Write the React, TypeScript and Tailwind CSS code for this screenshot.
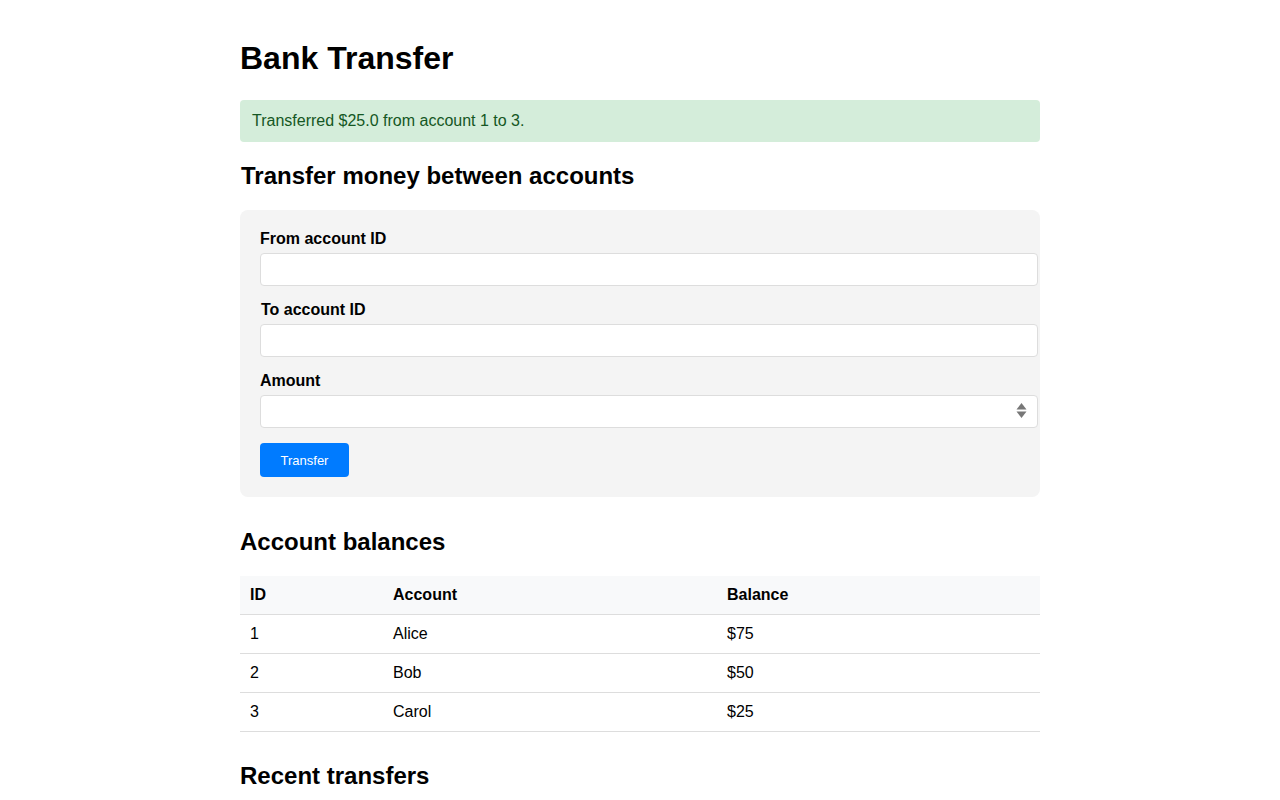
import React from "react";

export default function App() {
  const rows = [
    { id: 1, name: "Alice", bal: "$75" },
    { id: 2, name: "Bob", bal: "$50" },
    { id: 3, name: "Carol", bal: "$25" },
  ];
  return (
    <div
      className="min-h-[800px] bg-white text-black"
      style={{ fontFamily: '"Liberation Sans", Arial, sans-serif' }}
    >
      <div className="mx-auto w-[800px] pt-[40px] pb-10">
        <h1 className="text-[32px] font-bold leading-[37px]">Bank Transfer</h1>
        <div className="mt-[23px] rounded-[4px] bg-[#d4edda] px-[12px] py-[12px] text-[16px] leading-[18px] text-[#155724]">
          Transferred $25.0 from account 1 to 3.
        </div>
        <h2 className="mt-[20px] pl-px text-[24px] font-bold leading-[28px]">
          Transfer money between accounts
        </h2>
        <form
          className="mt-[20px] rounded-[8px] bg-[#f4f4f4] p-[20px]"
          onSubmit={(e) => e.preventDefault()}
        >
          <label className="block text-[16px] font-bold leading-[18px]">From account ID</label>
          <input
            type="text"
            className="mt-[5px] block h-[33px] w-[778px] rounded-[4px] border border-[#dddddd] bg-white px-[8px] text-[13px] outline-none"
          />
          <label className="mt-[15px] block pl-px text-[16px] font-bold leading-[18px]">To account ID</label>
          <input
            type="text"
            className="mt-[5px] block h-[33px] w-[778px] rounded-[4px] border border-[#dddddd] bg-white px-[8px] text-[13px] outline-none"
          />
          <label className="mt-[15px] block text-[16px] font-bold leading-[18px]">Amount</label>
          <div className="relative mt-[5px] h-[33px] w-[778px]">
            <input
              type="text"
              inputMode="decimal"
              className="block h-[33px] w-[778px] rounded-[4px] border border-[#dddddd] bg-white px-[8px] pr-[30px] text-[13px] outline-none"
            />
            <svg
              className="pointer-events-none absolute left-[756px] top-[8px]"
              width="11"
              height="16"
              viewBox="0 0 11 16"
            >
              <path d="M5.5 0 L10.5 6.5 L0.5 6.5 Z" fill="#777777" />
              <path d="M0.5 8.5 L10.5 8.5 L5.5 15 Z" fill="#777777" />
            </svg>
          </div>
          <button
            type="submit"
            className="mt-[15px] flex h-[34px] w-[89px] items-center justify-center rounded-[4px] bg-[#007bff] pt-px text-[13px] text-white"
          >
            Transfer
          </button>
        </form>
        <h2 className="mt-[31px] text-[24px] font-bold leading-[28px]">Account balances</h2>
        <table className="mt-[20px] w-full border-collapse text-[16px] leading-[18px]">
          <thead>
            <tr className="border-b border-[#dddddd] bg-[#f8f9fa]">
              <th className="w-[143px] p-[10px] text-left font-bold">ID</th>
              <th className="w-[334px] p-[10px] text-left font-bold">Account</th>
              <th className="p-[10px] text-left font-bold">Balance</th>
            </tr>
          </thead>
          <tbody>
            {rows.map((r) => (
              <tr key={r.id} className="border-b border-[#dddddd]">
                <td className="p-[10px]">{r.id}</td>
                <td className="p-[10px]">{r.name}</td>
                <td className="p-[10px]">{r.bal}</td>
              </tr>
            ))}
          </tbody>
        </table>
        <h2 className="mt-[30px] text-[24px] font-bold leading-[28px]">Recent transfers</h2>
      </div>
    </div>
  );
}
